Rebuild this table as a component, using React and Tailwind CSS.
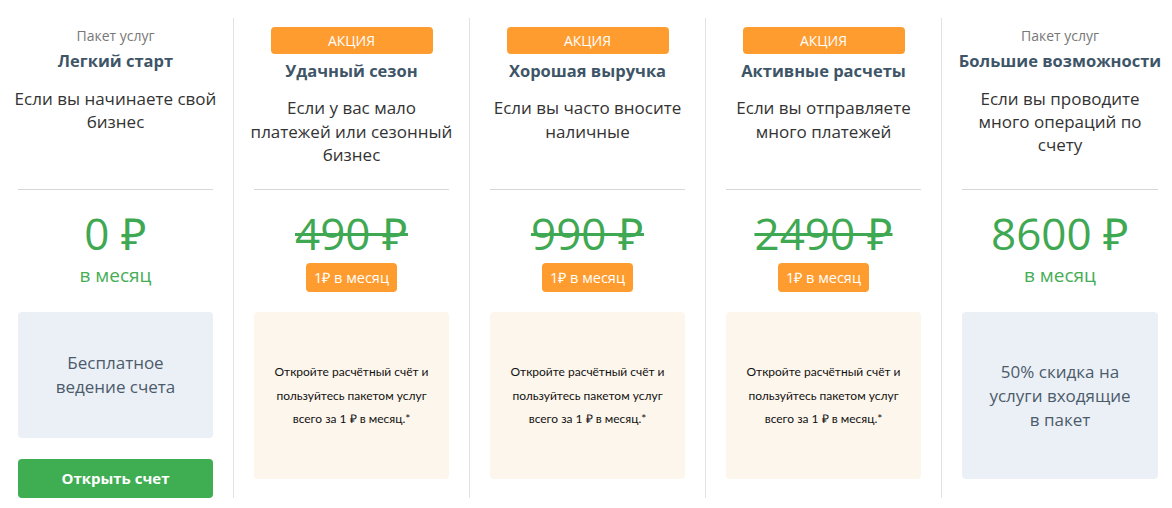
import React from "react";

const plans = [
  {
    label: "Пакет услуг",
    title: "Легкий старт",
    desc: "Если вы начинаете свой бизнес",
    price: "0 ₽",
    box: ["Бесплатное", "ведение счета"],
    button: true,
  },
  {
    promo: true,
    title: "Удачный сезон",
    desc: "Если у вас мало платежей или сезонный бизнес",
    price: "490 ₽",
  },
  {
    promo: true,
    title: "Хорошая выручка",
    desc: "Если вы часто вносите наличные",
    price: "990 ₽",
  },
  {
    promo: true,
    title: "Активные расчеты",
    desc: "Если вы отправляете много платежей",
    price: "2490 ₽",
  },
  {
    label: "Пакет услуг",
    title: "Большие возможности",
    desc: "Если вы проводите много операций по счету",
    price: "8600 ₽",
    box: ["50% скидка на", "услуги входящие", "в пакет"],
  },
];

const Plan = ({ plan, first, last }) => {
  return (
    <div
      className={
        "flex flex-col shrink-0 h-[480px] " +
        (first ? "w-[234px] pl-[18px] pr-[20px] " : "w-[236px] px-[20px] ") +
        (last ? "" : "border-r border-[#e2e2e2]")
      }
    >
      <div className="flex flex-col items-center h-[171px] text-center">
        {plan.promo ? (
          <>
            <div className="mt-[9px] w-[162px] h-[27px] rounded-[4px] bg-[#ff9c2f] text-white text-[14px] leading-[27px]">
              АКЦИЯ
            </div>
            <div className="mt-[6px] text-[16.5px] leading-[22px] font-bold text-[#3e5568] whitespace-nowrap">
              {plan.title}
            </div>
            <div className="mt-[14px] -mx-[6px] text-[17px] leading-[23.5px] text-[#333]">
              {plan.desc}
            </div>
          </>
        ) : (
          <>
            <div className="mt-[9px] text-[14px] leading-[18px] text-[#777]">{plan.label}</div>
            <div className="mt-[5px] text-[16.5px] leading-[22px] font-bold text-[#3e5568] whitespace-nowrap">
              {plan.title}
            </div>
            <div className="mt-[15px] -mx-[6px] text-[17px] leading-[23px] text-[#333]">{plan.desc}</div>
          </>
        )}
      </div>
      <div className="h-px bg-[#d8d8d8]" />
      <div className="flex flex-col items-center text-center">
        <div
          className={
            "mt-[19px] text-[44px] leading-[48px] text-[#3fa852] " +
            (plan.promo ? "line-through decoration-[3px]" : "")
          }
        >
          {plan.price}
        </div>
        {plan.promo ? (
          <div className="mt-[6px] h-[29px] px-[8px] rounded-[4px] bg-[#ff9c2f] text-white text-[14.5px] leading-[29px]">
            1₽ в месяц
          </div>
        ) : (
          <div className="mt-[6px] text-[19px] leading-[24px] text-[#45ad55]">в месяц</div>
        )}
      </div>
      {plan.promo ? (
        <div className="mt-[20px] h-[167px] rounded-[4px] bg-[#fdf6ec] flex items-center justify-center px-[18px] text-center font-['Lato',sans-serif] text-[12px] leading-[23.5px] text-[#111]">
          Откройте расчётный счёт и пользуйтесь пакетом услуг всего за 1 ₽ в месяц.*
        </div>
      ) : (
        <div
          className={
            "mt-[25px] rounded-[4px] bg-[#ebf0f6] flex flex-col items-center justify-center text-center text-[17px] leading-[24px] text-[#4b5b6b] " +
            (plan.button ? "h-[127px]" : "h-[167px]")
          }
        >
          {plan.box.map((line) => (
            <span key={line} className="whitespace-nowrap">
              {line}
            </span>
          ))}
        </div>
      )}
      {plan.button && (
        <button className="mt-[21px] h-[39px] rounded-[4px] bg-[#3fad52] text-white font-bold text-[15px]">
          Открыть счет
        </button>
      )}
    </div>
  );
};

const App = () => {
  return (
    <div className="w-[1172px] h-[508px] bg-white pt-[18px] overflow-hidden font-['Open_Sans',sans-serif]">
      <div className="flex flex-row">
        {plans.map((plan, i) => (
          <Plan key={i} plan={plan} first={i === 0} last={i === plans.length - 1} />
        ))}
      </div>
    </div>
  );
};

export default App;
